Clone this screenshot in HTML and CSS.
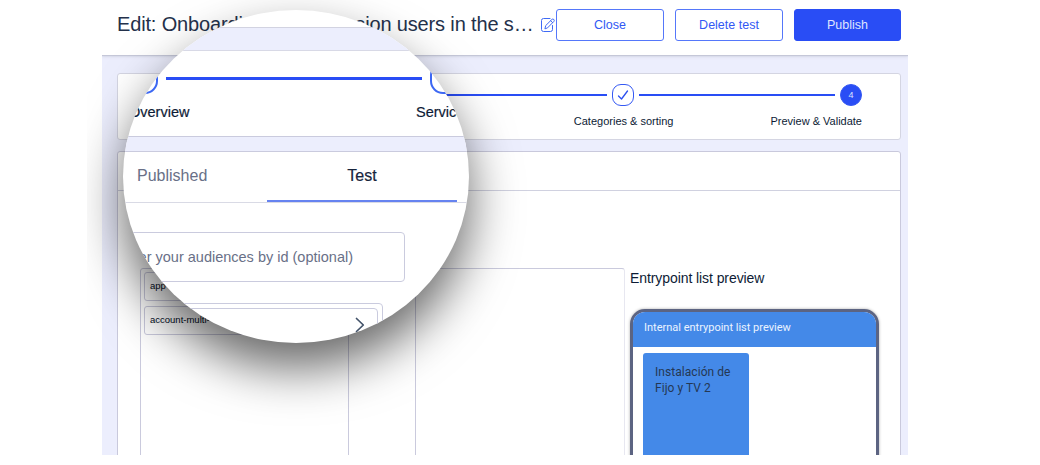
FILE: index.html
```html
<!DOCTYPE html>
<html lang="en">
<head>
<meta charset="utf-8">
<title>Preview &amp; Validate</title>
<link rel="stylesheet" href="styles.css">
</head>
<body>
<main class="app">
  <header class="topbar">
    <h1 class="title">Edit: Onboarding for our Fusion users in the s…</h1>
    <svg class="edit-icon" width="16" height="16" viewBox="0 0 16 16" fill="none" stroke="#3f6af5" stroke-linecap="round" stroke-linejoin="round">
      <path d="M12.5 8.5V12.5Q12.5 14.5 10.5 14.5H3.500Q1.500 14.500 1.500 12.500V3.500Q1.500 1.500 3.500 1.500H10"/>
      <path d="M5 11.500L5.700 8.600L11.800 2.500Q12.800 1.500 13.900 2.500Q14.700 3.500 13.800 4.500L7.800 10.600ZM10.700 3.800L12.600 5.600"/>
    </svg>
    <button class="btn">Close</button>
    <button class="btn">Delete test</button>
    <button class="btn primary">Publish</button>
  </header>
  <section class="card stepper">
    <div class="track">
      <span class="step"></span><span class="rail"></span>
      <span class="step"></span><span class="rail"></span>
      <span class="step"><svg width="14" height="14" viewBox="0 0 14 14" fill="none" stroke="#2d50f0" stroke-width="1.3" stroke-linecap="round" stroke-linejoin="round"><path d="M2.500 8L5.500 11L11.500 3"/></svg></span><span class="rail"></span>
      <span class="step current">4</span>
    </div>
    <div class="labels"><span>Categories &amp; sorting</span><span>Preview &amp; Validate</span></div>
  </section>
  <section class="card panel">
    <div class="panel-head"></div>
    <div class="columns">
      <div class="column list">
        <div class="entry">app</div>
        <div class="entry">account-multi-</div>
      </div>
      <div class="column second"></div>
      <div class="preview">
        <h2 class="preview-title">Entrypoint list preview</h2>
        <div class="phone">
          <div class="phone-bar">Internal entrypoint list preview</div>
          <div class="tile">Instalación de<br>Fijo y TV 2</div>
        </div>
      </div>
    </div>
  </section>
</main>
<div class="lens-area">
  <div class="lens">
    <div class="lens-top"></div>
    <div class="lens-steps">
      <div class="lens-track"><span class="lens-step"></span><span class="lens-rail"></span><span class="lens-step"></span></div>
      <div class="lens-labels"><span>Overview</span><span>Service</span></div>
    </div>
    <div class="tabs"><span class="tab">Published</span><span class="tab active">Test</span></div>
    <div class="filter">er your audiences by id (optional)</div>
    <div class="lens-list"><div class="lens-row">
      <svg width="10" height="16" viewBox="0 0 10 16" fill="none" stroke="#43536a" stroke-width="1.700" stroke-linecap="round" stroke-linejoin="round"><path d="M1.500 1.500L8.300 8L1.500 14.500"/></svg>
    </div></div>
  </div>
</div>
</body>
</html>
```
FILE: styles.css
```css
* { box-sizing: border-box; }
body { margin: 0; background: #fff; font-family: "Liberation Sans", Arial, sans-serif; color: #0d1b35; width: 1040px; height: 465px; overflow: hidden; position: relative; }
.app { width: 806px; height: 455px; margin-left: 102px; background: #eceefd; overflow: hidden; display: flex; flex-direction: column; }
.topbar { flex: none; height: 55px; background: #fff; display: flex; align-items: flex-start; padding: 9px 7px 0 15px; box-shadow: 0 1px 1px #c5c7d8, 0 2px 3px #d9dbea; }
.title { margin: 0; width: 423px; font-size: 20px; line-height: 31px; font-weight: 400; color: #24314b; white-space: nowrap; letter-spacing: -.15px; }
.edit-icon { margin: 8px 0 0 0; flex: none; }
.btn { flex: none; width: 108px; height: 32px; margin: 0 11px 0 0; padding: 0; border: 1px solid #5577fa; border-radius: 3px; background: #fff; color: #3158f4; font: 12.5px "Liberation Sans", Arial, sans-serif; letter-spacing: 0; }
.btn.primary { width: 107px; margin: 0; background: #294df5; border-color: #294df5; color: #dfe5ff; }
.card { background: #fff; border: 1px solid #d4d5e2; border-radius: 3px; margin: 0 7px 0 15px; flex: none; }
.stepper { height: 67px; margin-top: 18px; padding: 10px 38px 0 39px; }
.track { display: flex; align-items: center; gap: 5px; }
.step { flex: none; width: 22px; height: 22px; border: 1.500px solid #3559f3; border-radius: 9px; display: grid; place-items: center; }
.step.current { background: #294df5; border-radius: 50%; color: #dce3ff; font-size: 9px; }
.rail { flex: 1; height: 2px; background: #294df5; }
.labels { display: flex; justify-content: flex-end; gap: 97px; font-size: 11px; line-height: 14px; margin-top: 8px; white-space: nowrap; }
.panel { height: 340px; margin-top: 11px; border-color: #c9c9dc; }
.panel-head { height: 39px; border-bottom: 1px solid #d0d1e0; }
.columns { display: flex; padding: 77px 0 0 22px; }
.column { height: 230px; width: 209px; border: 1px solid #cacadd; border-radius: 3px; flex: none; }
.list { padding: 3px; }
.second { margin-left: 66px; width: 210px; border-right: 1.500px solid #e7e7f0; }
.entry { height: 29px; border: 1px solid #cacadd; border-radius: 3px; margin-bottom: 5px; padding-left: 5px; font-size: 9.500px; line-height: 26px; color: #000c1d; }
.preview { margin-left: 5px; width: 250px; }
.preview-title { margin: 0; height: 41px; font-size: 14px; line-height: 21px; letter-spacing: -.08px; font-weight: 400; white-space: nowrap; }
.phone { width: 249px; height: 190px; border: 3px solid #5c6482; border-radius: 15px 15px 0 0; overflow: hidden; box-shadow: 0 0 3px #aaa; font-family: Roboto, sans-serif; background: #fff; }
.phone-bar { height: 35px; background: #4489e8; color: #eaf3ff; padding-left: 11px; font-size: 11px; line-height: 31px; letter-spacing: 0; }
.tile { margin: 6px 0 0 10px; width: 106px; height: 130px; background: #4489e8; border-radius: 3px; padding: 11px 12px; font-size: 12px; line-height: 16px; color: #243854; white-space: nowrap; letter-spacing: .05px; }
/* magnifier over the page */
.lens-area { position: absolute; left: 87px; top: 0; width: 440px; height: 455px; padding: 10px 0 0 36px; overflow: hidden; }
.lens { width: 346px; height: 333px; border-radius: 50%; overflow: hidden; background: #fff; box-shadow: 0 25px 50px rgba(0,0,0,.6); }
.lens-top { height: 18px; border-bottom: 1px solid #d2d3e1; }
.lens-steps { border-top: 22px solid #eceefd; border-bottom: 1px solid #cacbde; height: 109px; padding: 12px 0 0 3px; box-shadow: inset 0 1px #d8d9e6; }
.lens-track { display: flex; align-items: center; gap: 8px; }
.lens-step { width: 32px; height: 32px; border: 2px solid #3d68f3; border-radius: 13px; flex: none; }
.lens-rail { width: 256px; height: 3px; background: #294df5; flex: none; }
.lens-labels { display: flex; padding-left: 3px; font-size: 14.500px; line-height: 18px; margin-top: 9px; white-space: nowrap; -webkit-text-stroke: .2px #17243c; }
.lens-labels span:first-child { width: 287px; }
.tabs { border-top: 14px solid #eceefd; box-shadow: inset 0 1px #cacbde; border-bottom: 1px solid #d9dae5; height: 66px; display: flex; font-size: 16px; line-height: 50px; color: #697087; }
.tab { width: 144px; padding-left: 14px; height: 51px; }
.tab.active { width: 190px; padding: 0; text-align: center; border-bottom: 2px solid #6683f0; color: #17243c; -webkit-text-stroke: .2px #17243c; }
.filter { width: 302px; height: 50px; margin: 29px 0 21px -20px; border: 1px solid #cacbde; border-radius: 4px; display: flex; justify-content: flex-end; padding-right: 51px; font-size: 14.500px; line-height: 49px; color: #697087; white-space: nowrap; }
.lens-list { width: 260px; height: 60px; border: 1px solid #cacbde; border-radius: 4px; padding: 4px; }
.lens-row { height: 45px; border: 1px solid #cacbde; border-radius: 4px; display: flex; justify-content: flex-end; padding: 8px 12px 0 0; }
```
